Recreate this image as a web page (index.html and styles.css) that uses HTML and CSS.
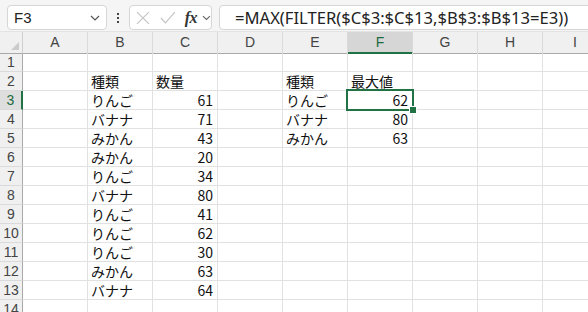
FILE: index.html
```html
<!DOCTYPE html>
<html lang="ja">
<head>
<meta charset="utf-8">
<link rel="stylesheet" href="styles.css">
</head>
<body>
<div class="app">
  <div class="toolbar">
    <div class="namebox">
      <span class="name">F3</span>
      <svg class="chev" width="10" height="6" viewBox="0 0 10 6"><path d="M1 1 L5 5 L9 1" fill="none" stroke="#555" stroke-width="1.2"/></svg>
    </div>
    <div class="dots"><span></span><span></span><span></span></div>
    <div class="fbtns">
      <svg width="14" height="14" viewBox="0 0 14 14"><path d="M1 1 L13 13 M13 1 L1 13" stroke="#c4c4c4" stroke-width="1.2"/></svg>
      <svg width="16" height="14" viewBox="0 0 16 14"><path d="M1 7 L5.5 12 L15 1" fill="none" stroke="#c4c4c4" stroke-width="1.2"/></svg>
      <span class="fx">fx</span>
      <svg class="chev2" width="9" height="6" viewBox="0 0 9 6"><path d="M1 1 L4.5 4.5 L8 1" fill="none" stroke="#666" stroke-width="1.1"/></svg>
    </div>
    <div class="formula">=MAX(FILTER($C$3:$C$13,$B$3:$B$13=E3))</div>
  </div>
  <div class="sheet">
    <div class="row head">
      <div class="corner"></div>
      <div class="ch">A</div><div class="ch">B</div><div class="ch">C</div><div class="ch">D</div><div class="ch">E</div><div class="ch act">F</div><div class="ch">G</div><div class="ch">H</div><div class="ch">I</div>
    </div>
    <div class="row"><div class="rh">1</div><div class="c"></div><div class="c"></div><div class="c"></div><div class="c"></div><div class="c"></div><div class="c"></div><div class="c"></div><div class="c"></div><div class="c"></div></div>
    <div class="row"><div class="rh">2</div><div class="c"></div><div class="c">種類</div><div class="c">数量</div><div class="c"></div><div class="c">種類</div><div class="c">最大値</div><div class="c"></div><div class="c"></div><div class="c"></div></div>
    <div class="row"><div class="rh act">3</div><div class="c"></div><div class="c">りんご</div><div class="c n">61</div><div class="c"></div><div class="c">りんご</div><div class="c n sel">62</div><div class="c"></div><div class="c"></div><div class="c"></div></div>
    <div class="row"><div class="rh">4</div><div class="c"></div><div class="c">バナナ</div><div class="c n">71</div><div class="c"></div><div class="c">バナナ</div><div class="c n">80</div><div class="c"></div><div class="c"></div><div class="c"></div></div>
    <div class="row"><div class="rh">5</div><div class="c"></div><div class="c">みかん</div><div class="c n">43</div><div class="c"></div><div class="c">みかん</div><div class="c n">63</div><div class="c"></div><div class="c"></div><div class="c"></div></div>
    <div class="row"><div class="rh">6</div><div class="c"></div><div class="c">みかん</div><div class="c n">20</div><div class="c"></div><div class="c"></div><div class="c"></div><div class="c"></div><div class="c"></div><div class="c"></div></div>
    <div class="row"><div class="rh">7</div><div class="c"></div><div class="c">りんご</div><div class="c n">34</div><div class="c"></div><div class="c"></div><div class="c"></div><div class="c"></div><div class="c"></div><div class="c"></div></div>
    <div class="row"><div class="rh">8</div><div class="c"></div><div class="c">バナナ</div><div class="c n">80</div><div class="c"></div><div class="c"></div><div class="c"></div><div class="c"></div><div class="c"></div><div class="c"></div></div>
    <div class="row"><div class="rh">9</div><div class="c"></div><div class="c">りんご</div><div class="c n">41</div><div class="c"></div><div class="c"></div><div class="c"></div><div class="c"></div><div class="c"></div><div class="c"></div></div>
    <div class="row"><div class="rh">10</div><div class="c"></div><div class="c">りんご</div><div class="c n">62</div><div class="c"></div><div class="c"></div><div class="c"></div><div class="c"></div><div class="c"></div><div class="c"></div></div>
    <div class="row"><div class="rh">11</div><div class="c"></div><div class="c">りんご</div><div class="c n">30</div><div class="c"></div><div class="c"></div><div class="c"></div><div class="c"></div><div class="c"></div><div class="c"></div></div>
    <div class="row"><div class="rh">12</div><div class="c"></div><div class="c">みかん</div><div class="c n">63</div><div class="c"></div><div class="c"></div><div class="c"></div><div class="c"></div><div class="c"></div><div class="c"></div></div>
    <div class="row"><div class="rh">13</div><div class="c"></div><div class="c">バナナ</div><div class="c n">64</div><div class="c"></div><div class="c"></div><div class="c"></div><div class="c"></div><div class="c"></div><div class="c"></div></div>
    <div class="row"><div class="rh">14</div><div class="c"></div><div class="c"></div><div class="c"></div><div class="c"></div><div class="c"></div><div class="c"></div><div class="c"></div><div class="c"></div><div class="c"></div></div>
  </div>
</div>
</body>
</html>
```
FILE: styles.css
```css
* { box-sizing: border-box; }
html, body { margin: 0; padding: 0; background: #fff; }
body { width: 588px; height: 312px; overflow: hidden; font-family: "Noto Sans CJK JP", "Noto Sans", sans-serif; }
.app { width: 588px; height: 312px; overflow: hidden; }

.toolbar {
  height: 32px;
  background: #f5f5f5;
  border-bottom: 1px solid #e3e3e3;
  display: flex;
  align-items: flex-start;
  padding: 5px 0 0 7px;
  overflow: hidden;
}
.toolbar > * { flex-shrink: 0; }
.namebox {
  width: 100px; height: 25px;
  background: #fff;
  border: 1px solid #d6d6d6;
  border-radius: 4px;
  display: flex; align-items: center; justify-content: space-between;
  padding: 0 6px 0 6px;
}
.name { font-family: "Liberation Sans", sans-serif; font-size: 15px; color: #222; }
.chev { margin-top: 1px; }
.dots {
  width: 22px; height: 25px;
  display: flex; flex-direction: column; align-items: center; justify-content: center; gap: 2px;
}
.dots span { width: 2px; height: 2px; background: #444; display: block; }
.fbtns {
  width: 83px; height: 25px;
  background: #fff;
  border: 1px solid #d6d6d6;
  border-radius: 4px;
  display: flex; align-items: center;
  padding: 0 0 0 6px;
  gap: 10px;
}
.fx { font-family: "Liberation Serif", "DejaVu Serif", serif; font-style: italic; font-weight: bold; font-size: 16px; color: #333; margin-left: -1px; letter-spacing: -0.5px; }
.chev2 { margin-left: -5px; }
.formula {
  margin-left: 7px;
  width: 400px; height: 25px;
  background: #fff;
  border: 1px solid #d6d6d6;
  border-radius: 4px;
  padding: 0 0 0 15px;
  font-family: "Noto Sans", "Open Sans", sans-serif;
  font-size: 16.6px;
  line-height: 23px;
  color: #222;
  white-space: nowrap;
}

.row {
  display: grid;
  grid-template-columns: 23px repeat(9, 65px);
  height: 19px;
}
.row.head { height: 21px; }
.corner {
  background: #f0f0f0;
  border-right: 1px solid #cfcfcf;
  border-bottom: 1px solid #a9a9a9;
  position: relative;
}
.corner::after {
  content: ""; position: absolute; right: 3px; bottom: 3px;
  width: 0; height: 0;
  border-left: 8px solid transparent;
  border-bottom: 8px solid #cbcbcb;
}
.ch {
  background: #f0f0f0;
  border-right: 1px solid #dadada;
  border-bottom: 1px solid #a9a9a9;
  font-family: "Liberation Sans", sans-serif;
  font-size: 14px; color: #444;
  text-align: center; line-height: 20px;
}
.ch.act { background: #d6d6d6; color: #1e6b40; border-bottom: 2px solid #217346; }
.rh {
  background: #f0f0f0;
  border-right: 1px solid #a9a9a9;
  border-bottom: 1px solid #dadada;
  font-family: "Liberation Sans", sans-serif;
  font-size: 14px; color: #444;
  text-align: center; line-height: 18px;
}
.rh.act { background: #dedede; color: #1e6b40; border-right: 2px solid #217346; }
.c {
  border-right: 1px solid #e1e1e1;
  border-bottom: 1px solid #e1e1e1;
  font-size: 14px; line-height: 18px; color: #111;
  padding: 0 3px;
  white-space: nowrap; overflow: visible;
}
.c.n { text-align: right; padding-right: 4px; }
.c.sel { position: relative; }
.c.sel::before {
  content: ""; position: absolute;
  left: -2px; top: -2px; right: -2px; bottom: -2px;
  border: 2px solid #217346;
}
.c.sel::after {
  content: ""; position: absolute;
  right: -5px; bottom: -5px;
  width: 6px; height: 6px;
  background: #217346;
  border: 1px solid #fff;
}
```
